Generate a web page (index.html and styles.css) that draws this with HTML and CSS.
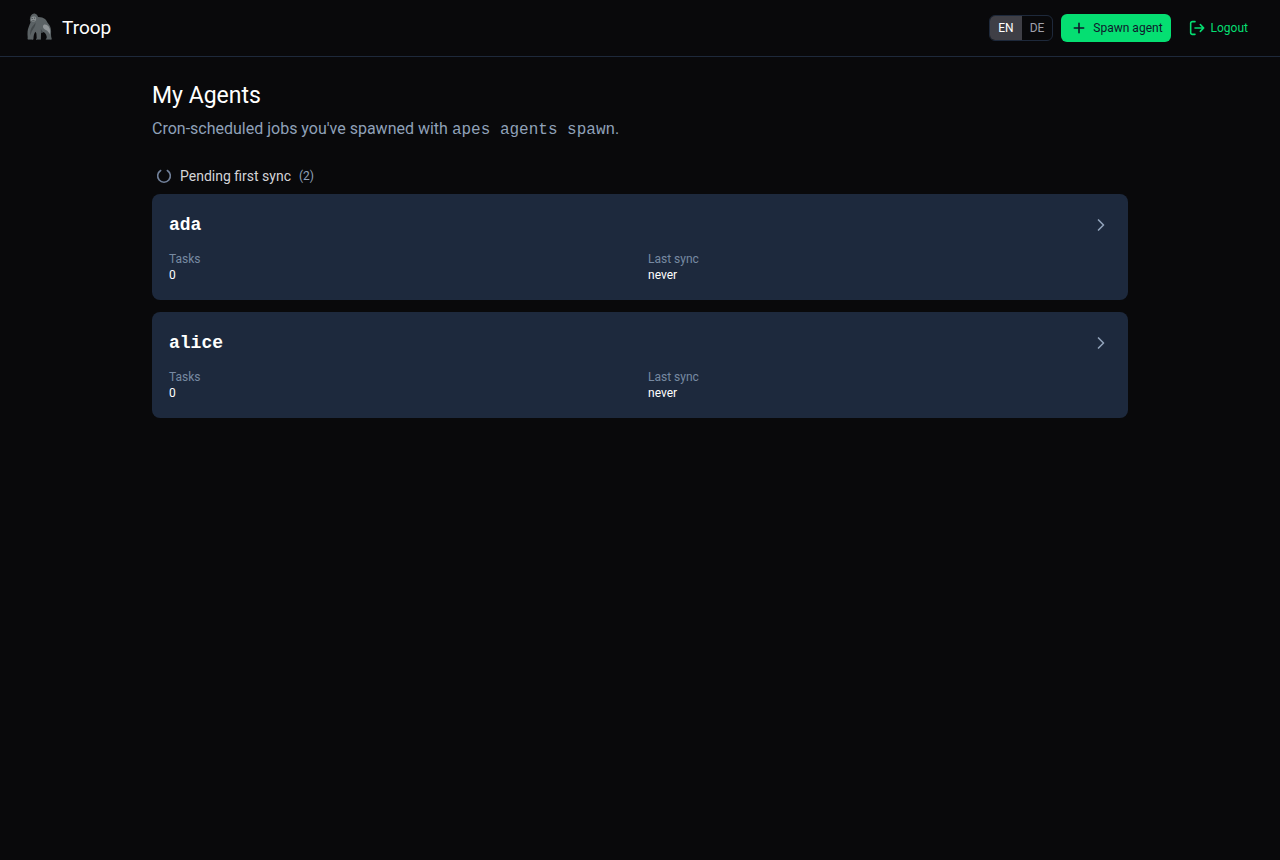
FILE: index.html
```html
<!DOCTYPE html>
<html lang="en">
<head>
<meta charset="utf-8">
<meta name="viewport" content="width=device-width, initial-scale=1">
<title>Troop</title>
<link rel="stylesheet" href="styles.css">
</head>
<body>
<header class="topbar">
  <a class="brand" href="#">
    <svg class="brand-logo" viewBox="0 0 30 30" aria-hidden="true">
      <path fill="#5b6265" d="M6.500 3.500C7.500 1.200 9.500.2 11.200.7c1.600.5 2.400 1.700 2.900 3.200 2.700-.1 5.200.6 6.900 2 1.500 1.300 2.200 3 3.200 4.700 1.700 1.800 2.800 4.300 2.900 7.400 0 2.500-.3 4.600.4 7 .4.7.2 1.300-.3 1.800h-5.300c-.3-.6 0-1.200.8-1.600.3-2.500-.8-4.500-3-6.200l-2.600.6-.2 5.400c.2.800 0 1.400-.4 1.800h-4.300c-.4-.5-.1-1.100.5-1.600l-.3-4.800-.9-1.600c-1.300 1.500-1.900 3.700-2 6.200.1.700 0 1.300-.5 1.700H4.100c-.6-.6-.6-1.500-.4-2.300-.4-4-.3-7.500 1-10.300C5.300 12.300 6 10.800 6.600 9.300 5.600 7.500 5.700 5.500 6.500 3.500Z"/>
      <path fill="#919699" d="M20.200 11.500c2.500-.2 4.300 1.200 5.300 3.400.8 2.100.5 4.400.5 6.500-1-2-2.200-3.500-4.100-4.500-1.400-.8-2.700-1.700-2.900-3-.1-1.100.3-2 1.200-2.400Z"/>
      <path fill="#8a9093" d="M7.200 4.700c1-1.200 3-1.700 4.500-.8.8 1.100.6 2.300 0 3.500-.7 1.100-2.700 1.600-3.800.9-1-.8-1.100-2.300-.7-3.600Z"/>
      <path fill="#43494c" d="M11.500 9.500c.2 2.400-.8 4.300-2 5.900-1.600 2.200-2.600 4.200-2.900 7-.7-2.300-.5-4.700.6-6.900 1-2 2.600-3.600 4.300-6Zm5.300 6.200c.7 1.500 1.600 2.600 2.700 3.700l-2.600.6c0-1.500.1-2.700-.1-4.300Z"/>
      <path fill="#303638" d="M7.600 5h1.200v.8H7.600zm2.400-.2h1.100v.8H10zM8.200 7.200h2.400v.5H8.200z"/>
      <path fill="#33383b" d="M4 25.900h4v.8H4zm9 0h4v.8h-4zm9 0h4.500v.8H22z"/>
    </svg>
    <span>Troop</span>
  </a>
  <div class="actions">
    <div class="lang" role="group" aria-label="Language">
      <button class="lang-option is-active" type="button" aria-pressed="true">EN</button>
      <button class="lang-option" type="button" aria-pressed="false">DE</button>
    </div>
    <button class="btn btn-primary" type="button">
      <svg class="icon" viewBox="0 0 24 24" aria-hidden="true"><path d="M5 12h14M12 5v14"/></svg>
      Spawn agent
    </button>
    <button class="btn btn-ghost" type="button">
      <svg class="icon" viewBox="0 0 24 24" aria-hidden="true"><path d="M9 21.500H5a2.500 2.500 0 0 1-2.500-2.500V5A2.500 2.500 0 0 1 5 2.500h4M9 12h13m-5-5 5 5-5 5"/></svg>
      Logout
    </button>
  </div>
</header>
<main class="content">
  <h1 class="title">My Agents</h1>
  <p class="subtitle">Cron-scheduled jobs you've spawned with <code>apes agents spawn</code>.</p>
  <section>
    <h2 class="section-title">
      <svg class="icon spinner" viewBox="0 0 24 24" aria-hidden="true"><path d="M17 3.800a9.500 9.500 0 1 1-10 0"/></svg>
      Pending first sync
      <span class="count">(2)</span>
    </h2>
    <div class="agents">
      <a class="card" href="#ada">
        <div class="card-head">
          <h3 class="agent-name">ada</h3>
          <svg class="chevron" viewBox="0 0 24 24" aria-hidden="true"><path d="m9 18 6-6-6-6"/></svg>
        </div>
        <dl class="stats">
          <div><dt>Tasks</dt><dd>0</dd></div>
          <div><dt>Last sync</dt><dd>never</dd></div>
        </dl>
      </a>
      <a class="card" href="#alice">
        <div class="card-head">
          <h3 class="agent-name">alice</h3>
          <svg class="chevron" viewBox="0 0 24 24" aria-hidden="true"><path d="m9 18 6-6-6-6"/></svg>
        </div>
        <dl class="stats">
          <div><dt>Tasks</dt><dd>0</dd></div>
          <div><dt>Last sync</dt><dd>never</dd></div>
        </dl>
      </a>
    </div>
  </section>
</main>
</body>
</html>
```
FILE: styles.css
```css
* { box-sizing: border-box; }
body {
  margin: 0;
  min-height: 100vh;
  background: #09090b;
  color: #fff;
  font: 16px/24px Roboto, "Liberation Sans", sans-serif;
}
h1, h2, h3, p, dl, dd { margin: 0; font-weight: inherit; }
a { color: inherit; text-decoration: none; }
button { border: 0; background: none; font: inherit; cursor: pointer; }
svg { flex: none; fill: none; }

.topbar {
  display: flex;
  align-items: center;
  justify-content: space-between;
  height: 57px;
  padding: 0 24px;
  border-bottom: 1px solid #1e293b;
}
.brand { display: flex; align-items: center; gap: 8px; font-size: 19px; line-height: 28px; }
.brand-logo { width: 30px; height: 30px; }
.actions { display: flex; align-items: center; gap: 8px; }
.lang {
  display: flex;
  overflow: hidden;
  border: 1px solid #1e293b;
  border-radius: 6px;
}
.lang-option { padding: 4px 8px; color: #9f9fa9; font-size: 12px; line-height: 16px; }
.lang-option.is-active { background: #3f3f46; color: #fff; }
.btn {
  display: flex;
  align-items: center;
  gap: 6px;
  padding: 6px 8px 6px 10px;
  border-radius: 6px;
  font-size: 12px;
  line-height: 16px;
}
.btn-primary { background: #05df72; color: #0f172b; }
.btn-ghost { color: #05df72; }
.icon {
  width: 16px;
  height: 16px;
  stroke: currentColor;
  stroke-width: 2.4;
  stroke-linecap: round;
  stroke-linejoin: round;
}

.content { max-width: 1024px; margin: 0 auto; padding: 24px; }
.title { font-size: 23px; line-height: 30px; }
.subtitle { margin-top: 6px; color: #90a1b9; }
code, .agent-name { font-family: "Liberation Mono", monospace; }
code { font-size: 16px; }
.section-title {
  display: flex;
  align-items: center;
  gap: 8px;
  margin-top: 24px;
  padding: 0 4px;
  color: #d4d4d8;
  font-size: 14px;
  line-height: 20px;
}
.spinner { color: #71809a; }
.count { color: #90a1b9; font-size: 12px; }
.agents { display: grid; gap: 12px; margin-top: 8px; }
.card { padding: 17px; border-radius: 8px; background: #1d293d; }
.card-head { display: flex; align-items: center; justify-content: space-between; }
.agent-name { font-size: 18px; line-height: 28px; font-weight: 700; }
.chevron { width: 20px; height: 20px; stroke: #90a1b9; stroke-width: 2; stroke-linecap: round; stroke-linejoin: round; }
.stats { display: grid; grid-template-columns: 1fr 1fr; gap: 16px; margin-top: 12px; font-size: 12px; line-height: 16px; }
.stats dt { color: #7789a2; }
```
